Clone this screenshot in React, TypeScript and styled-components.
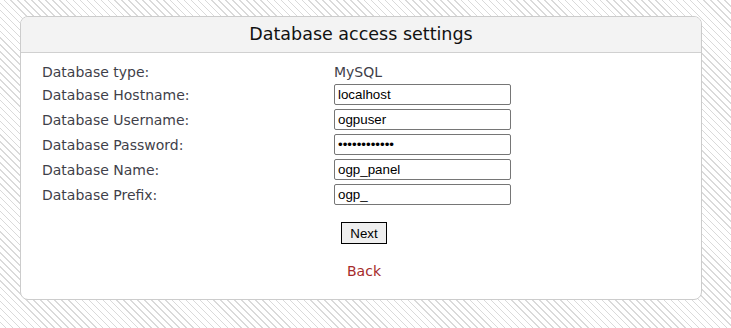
import React from "react";
import styled, { createGlobalStyle } from "styled-components";

const GlobalStyle = createGlobalStyle`
  html, body {
    margin: 0;
    padding: 0;
  }
  body {
    width: 731px;
    height: 328px;
    overflow: hidden;
    background-color: #fff;
    background-image: repeating-linear-gradient(
      45deg,
      #fff 0px,
      #fff 3.8px,
      #dadada 3.8px,
      #dadada 4.9px
    );
    font-family: Tahoma, "DejaVu Sans", Verdana, sans-serif;
  }
`;

const Page = styled.div`
  padding: 16px 29px 0 20px;
`;

const Panel = styled.div`
  background: #fff;
  border: 1px solid #cccccc;
  border-radius: 8px;
  height: 284px;
  box-sizing: border-box;
  overflow: hidden;
`;

const PanelHeader = styled.div`
  background: #f3f3f3;
  border-bottom: 1px solid #d0d0d0;
  height: 36px;
  display: flex;
  align-items: center;
  justify-content: center;
  font-size: 17.5px;
  color: #111;
  padding-bottom: 1px;
  box-sizing: border-box;
`;

const FormGrid = styled.div`
  display: grid;
  grid-template-columns: 292px 1fr;
  grid-template-rows: 17px repeat(5, 21px);
  row-gap: 4px;
  padding: 10px 0 0 21px;
  color: #3f3f4a;
  font-size: 14px;
`;

const Label = styled.div`
  display: flex;
  align-items: center;
  white-space: nowrap;
`;

const Value = styled.div`
  display: flex;
  align-items: center;
`;

const TextInput = styled.input`
  box-sizing: border-box;
  width: 177px;
  height: 21px;
  border: 1px solid #767676;
  border-radius: 2px;
  padding: 1px 3px;
  font-family: "Liberation Sans", Arial, sans-serif;
  font-size: 13.33px;
  color: #000;
  background: #fff;
  margin: 0;
`;

const Actions = styled.div`
  display: flex;
  flex-direction: column;
  align-items: center;
  padding: 17px 0 0 6px;
`;

const Button = styled.button`
  box-sizing: border-box;
  height: 22px;
  width: 46px;
  border: 1px solid #000;
  border-radius: 0;
  background: #efefef;
  font-family: "Liberation Sans", Arial, sans-serif;
  font-size: 13.33px;
  color: #000;
  padding: 0;
`;

const BackLink = styled.a`
  margin-top: 19px;
  color: #a52a2a;
  font-size: 14px;
  text-decoration: none;
`;

const fields = [
  { label: "Database Hostname:", value: "localhost", type: "text" },
  { label: "Database Username:", value: "ogpuser", type: "text" },
  { label: "Database Password:", value: "ogppassword1", type: "password" },
  { label: "Database Name:", value: "ogp_panel", type: "text" },
  { label: "Database Prefix:", value: "ogp_", type: "text" },
];

const App: React.FC = () => {
  return (
    <Page>
      <GlobalStyle />
      <Panel>
        <PanelHeader>Database access settings</PanelHeader>
        <FormGrid>
          <Label>Database type:</Label>
          <Value>MySQL</Value>
          {fields.map((f) => (
            <React.Fragment key={f.label}>
              <Label>{f.label}</Label>
              <Value>
                <TextInput type={f.type} defaultValue={f.value} />
              </Value>
            </React.Fragment>
          ))}
        </FormGrid>
        <Actions>
          <Button type="button">Next</Button>
          <BackLink href="#">Back</BackLink>
        </Actions>
      </Panel>
    </Page>
  );
};

export default App;
